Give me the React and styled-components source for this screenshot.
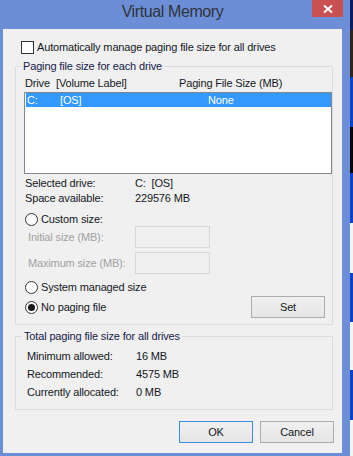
import React from "react";
import styled, { createGlobalStyle } from "styled-components";

const GlobalStyle = createGlobalStyle`
    * {
        box-sizing: border-box;
    }

    body {
        margin: 0;
        background: #ffffff;
        font-family: "Liberation Sans", Arial, sans-serif;
    }
`

const totals = [
    { label: "Minimum allowed:", value: "16 MB" },
    { label: "Recommended:", value: "4575 MB" },
    { label: "Currently allocated:", value: "0 MB" },
];

export default function App() {
    return (
        <Screen>
            <GlobalStyle />
            <Window>
                <TitleBar>
                    <Title>Virtual Memory</Title>
                    <CloseButton>
                        <svg width="10" height="8" viewBox="0 0 10 8">
                            <path d="M1 0.5 L9 7.5 M9 0.5 L1 7.5" stroke="#ffffff" strokeWidth="2" />
                        </svg>
                    </CloseButton>
                </TitleBar>

                <Client>
                    <CheckRow>
                        <CheckBox />
                        <span>Automatically manage paging file size for all drives</span>
                    </CheckRow>

                    <Group>
                        <Legend>Paging file size for each drive</Legend>
                        <DriveSection>
                            <Columns>
                                <span>Drive</span>
                                <span>[Volume Label]</span>
                                <span>Paging File Size (MB)</span>
                            </Columns>

                            <ListBox>
                                <DriveRow $selected>
                                    <span>C:</span>
                                    <span>[OS]</span>
                                    <span>None</span>
                                </DriveRow>
                            </ListBox>

                            <InfoRow $first>
                                <span>Selected drive:</span>
                                <span>C:&nbsp;&nbsp;[OS]</span>
                            </InfoRow>
                            <InfoRow>
                                <span>Space available:</span>
                                <span>229576 MB</span>
                            </InfoRow>

                            <RadioRow $gap={6}>
                                <Radio />
                                <span>Custom size:</span>
                            </RadioRow>

                            <SizeRow $gap={0}>
                                <SizeLabel>Initial size (MB):</SizeLabel>
                                <SizeInput />
                            </SizeRow>
                            <SizeRow $gap={4}>
                                <SizeLabel>Maximum size (MB):</SizeLabel>
                                <SizeInput />
                            </SizeRow>

                            <RadioRow $gap={6}>
                                <Radio />
                                <span>System managed size</span>
                            </RadioRow>

                            <SetRow>
                                <RadioLabel>
                                    <Radio $checked />
                                    <span>No paging file</span>
                                </RadioLabel>
                                <Button>Set</Button>
                            </SetRow>
                        </DriveSection>
                    </Group>

                    <Group $spaced>
                        <Legend $offset={6}>Total paging file size for all drives</Legend>
                        <TotalsSection>
                            {totals.map((item) => (
                                <TotalRow key={item.label}>
                                    <span>{item.label}</span>
                                    <span>{item.value}</span>
                                </TotalRow>
                            ))}
                        </TotalsSection>
                    </Group>

                    <ButtonRow>
                        <Button $primary>OK</Button>
                        <Button>Cancel</Button>
                    </ButtonRow>
                </Client>
            </Window>
            <Desktop />
        </Screen>
    )
}

const Screen = styled.main`
    width: 353px;
    height: 456px;
    display: flex;
    overflow: hidden;
`

const Window = styled.section`
    width: 350px;
    height: 456px;
    background: #6b8ed6;
    display: flex;
    flex-direction: column;
    padding: 0 8px 3px 3px;
`

const TitleBar = styled.header`
    position: relative;
    height: 29px;
    display: flex;
    justify-content: center;
    padding-top: 3px;
`

const Title = styled.h1`
    margin: 0;
    font-size: 16px;
    font-weight: 400;
    line-height: 18px;
    letter-spacing: -0.4px;
    color: #30343c;
`

const CloseButton = styled.div`
    position: absolute;
    top: 0;
    right: -1px;
    width: 31px;
    height: 17px;
    background: #c75050;
    display: flex;
    align-items: center;
    justify-content: center;
`

const Desktop = styled.div`
    width: 3px;
    height: 456px;
    background: linear-gradient(
        #0b1d5e 0 30px,
        #2f2618 30px 77px,
        #0b44c8 77px 127px,
        #050505 127px 173px,
        #0b44c8 173px 223px,
        #f4f4f4 223px 273px,
        #0b44c8 273px 322px,
        #f4f4f4 322px 370px,
        #0b44c8 370px 420px,
        #f4f4f4 420px 456px
    );
`

const Client = styled.section`
    flex: 1;
    background: #f0f0f0;
    display: flex;
    flex-direction: column;
    padding: 12px 8px 0 12px;
    font-size: 11px;
    letter-spacing: -0.15px;
    color: #141824;
`

const CheckRow = styled.label`
    height: 13px;
    display: flex;
    align-items: center;
    gap: 3px;
    margin-left: 6px;
    line-height: 13px;
`

const CheckBox = styled.span`
    width: 13px;
    height: 13px;
    border: 1px solid #333333;
    background: #ffffff;
`

const Group = styled.fieldset`
    width: 318px;
    min-width: 0;
    margin: ${(p) => (p.$spaced ? "4px" : "5px")} 0 0 0;
    padding: 0;
    border: 1px solid #dcdcdc;
`

const Legend = styled.legend`
    margin-left: ${(p) => p.$offset || 5}px;
    padding: 0 2px;
    line-height: 14px;
    color: #16204a;
`

const DriveSection = styled.div`
    display: flex;
    flex-direction: column;
    padding: 3px 0 6px;
`

const Columns = styled.div`
    display: grid;
    grid-template-columns: 31px 123px auto;
    padding-left: 9px;
    line-height: 14px;
`

const ListBox = styled.div`
    width: 308px;
    height: 82px;
    margin: 2px 0 0 8px;
    border: 1px solid #828790;
    background: #ffffff;
    padding-left: 1px;
`

const DriveRow = styled.div`
    height: 14px;
    display: grid;
    grid-template-columns: 33px 148px auto;
    padding-left: 1px;
    line-height: 14px;
    background: ${(p) => (p.$selected ? "#3399ff" : "transparent")};
    color: ${(p) => (p.$selected ? "#ffffff" : "inherit")};
`

const InfoRow = styled.div`
    display: grid;
    grid-template-columns: 110px auto;
    padding-left: 9px;
    margin-top: ${(p) => (p.$first ? "2px" : "0")};
    line-height: 15px;
`

const RadioRow = styled.label`
    height: 14px;
    display: flex;
    align-items: center;
    gap: 3px;
    padding-left: 9px;
    margin-top: ${(p) => p.$gap}px;
`

const RadioLabel = styled.label`
    display: flex;
    align-items: center;
    gap: 3px;
`

const Radio = styled.span`
    width: 13px;
    height: 13px;
    border-radius: 50%;
    border: 1px solid #333333;
    background: #ffffff;
    display: flex;
    align-items: center;
    justify-content: center;

    &::after {
        content: "";
        width: 7px;
        height: 7px;
        border-radius: 50%;
        background: #1a1a1a;
        display: ${(p) => (p.$checked ? "block" : "none")};
    }
`

const SizeRow = styled.div`
    height: 22px;
    display: flex;
    align-items: center;
    padding-left: 12px;
    margin-top: ${(p) => p.$gap}px;
`

const SizeLabel = styled.span`
    width: 107px;
    color: #a0a0a0;
`

const SizeInput = styled.div`
    width: 75px;
    height: 22px;
    border: 1px solid #d9d9d9;
    background: #f0f0f0;
`

const SetRow = styled.div`
    height: 22px;
    display: flex;
    align-items: center;
    justify-content: space-between;
    padding: 0 7px 0 9px;
    margin-top: 2px;
`

const Button = styled.button`
    width: 74px;
    height: 22px;
    padding: 0;
    border: 1px solid ${(p) => (p.$primary ? "#3d8ee0" : "#acacac")};
    background: linear-gradient(#f0f0f0, #e5e5e5);
    font-family: "Liberation Sans", Arial, sans-serif;
    font-size: 11px;
    letter-spacing: -0.15px;
    color: #141824;
`

const TotalsSection = styled.div`
    display: flex;
    flex-direction: column;
    padding: 4px 0 8px 11px;
`

const TotalRow = styled.div`
    height: 18px;
    display: grid;
    grid-template-columns: 109px auto;
    align-items: center;
`

const ButtonRow = styled.div`
    display: flex;
    justify-content: flex-end;
    gap: 7px;
    margin-top: 11px;
`
